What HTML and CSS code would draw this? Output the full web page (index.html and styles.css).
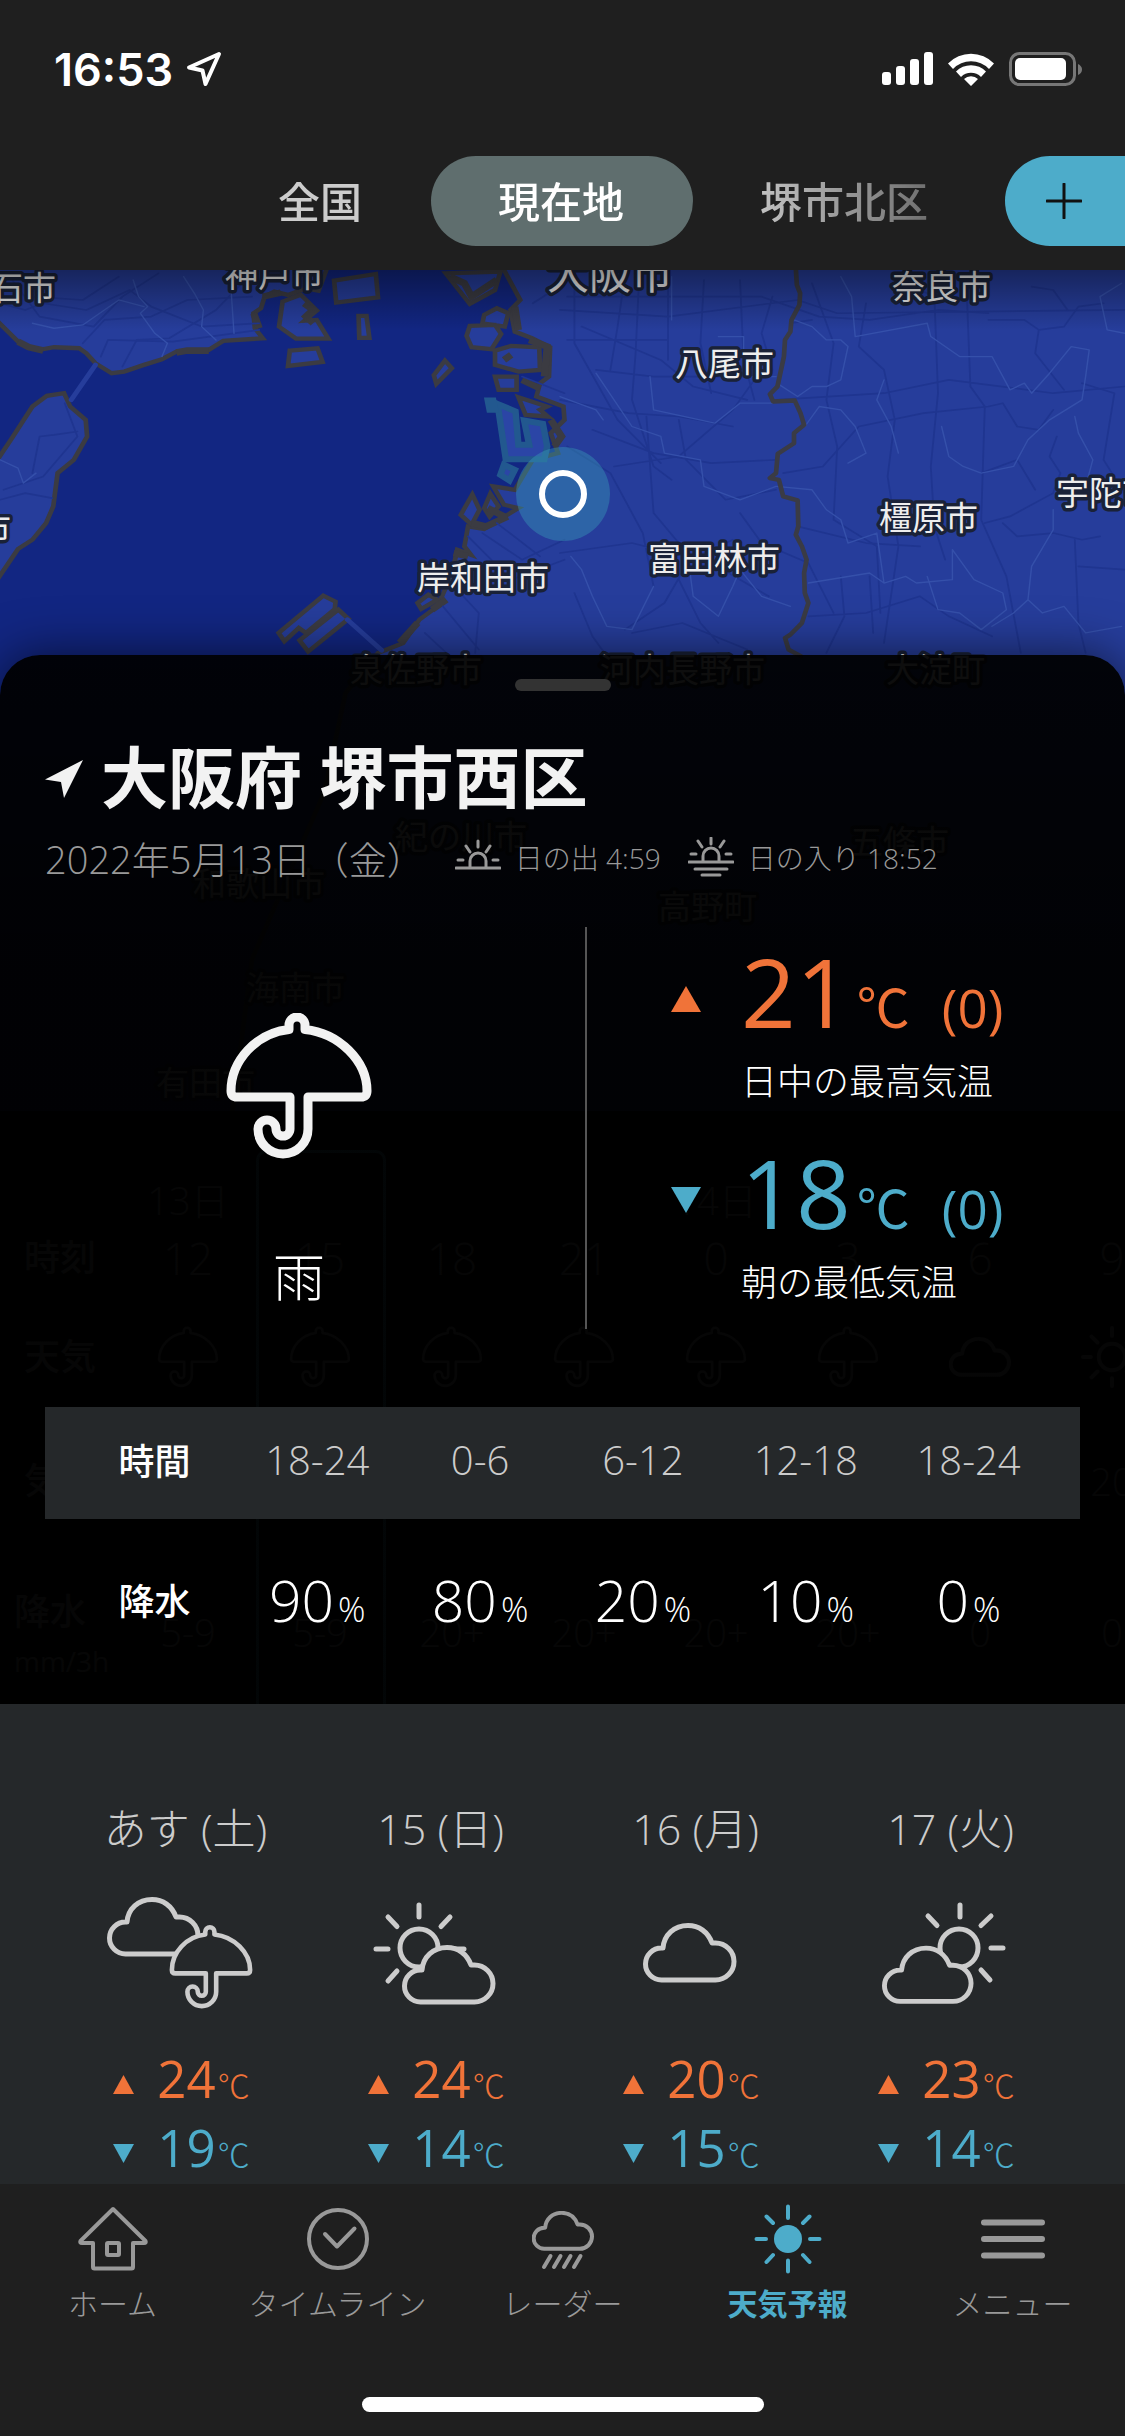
FILE: index.html
```
<!DOCTYPE html>
<html lang="ja">
<head>
  <meta charset="UTF-8">
  <meta name="viewport" content="width=device-width, initial-scale=1.0">
  <title>天気予報</title>
  <link rel="stylesheet" href="styles.css">
</head>
<body>
  <!-- アイコン -->
  <svg class="defs" width="0" height="0" aria-hidden="true">
    <symbol id="umbrella" viewBox="0 0 146 146">
      <path d="M63 16.500V12a8 8 0 0 1 16 0V16.500C113 20 141 48 141 78q0 6-6 6H82V116a25 25 0 0 1-50 0a9 9 0 0 1 18 0a7 7 0 0 0 14 0V84H11q-6 0-6-6C5 48 30 20 63 16.500Z"/>
    </symbol>
    <symbol id="cloud" viewBox="0 0 94 60">
      <path d="M18.500 25a16 16 0 0 0 0 32H72.500a18.500 18.500 0 0 0 0-37h-3.500C65 9 56 2.500 45 2.500C31 2.500 21 12 20 25Z"/>
    </symbol>
    <symbol id="sunny" viewBox="0 0 94 94">
      <circle cx="47" cy="47" r="20"/>
      <path d="M47 3V15M47 79V91M3 47H15M79 47H91M16 16 25 25M78 16 69 25M16 78 25 69M78 78 69 69"/>
    </symbol>
  </svg>

  <div class="app">
    <header class="header">
      <div class="status">
        <span class="clock">16:53</span>
        <svg class="status-arrow" viewBox="0 0 36 36"><path d="M33 3 3 16.500l13.500 3L19.500 33Z"/></svg>
        <svg class="status-icons" viewBox="0 0 202 36">
          <rect x="0" y="21" width="9" height="13" rx="3"/>
          <rect x="14" y="15" width="9" height="19" rx="3"/>
          <rect x="28" y="8" width="9" height="26" rx="3"/>
          <rect x="42" y="1" width="9" height="33" rx="3"/>
          <path d="M66 12.500a32 32 0 0 1 46 0l-5 5.500a25 25 0 0 0-36 0ZM74 20.500a21 21 0 0 1 30 0l-5 5.500a14 14 0 0 0-20 0ZM82 28a10 10 0 0 1 14 0l-7 7Z"/>
          <rect class="batt-case" x="128.500" y="2.500" width="64" height="31" rx="9"/>
          <rect x="133" y="7" width="51" height="22" rx="5"/>
          <path class="batt-cap" d="M196 13q4 2 4 5.500t-4 5.500Z"/>
        </svg>
      </div>
      <div class="bar">
        <nav class="tabs">
          <button class="tab">全国</button>
          <button class="tab active">現在地</button>
          <button class="tab">堺市北区</button>
        </nav>
        <button class="add" aria-label="地点を追加">
          <svg viewBox="0 0 36 36"><path d="M18 1V35M1 18H35"/></svg>
        </button>
      </div>
    </header>

    <main>
      <div class="stage">
        <!-- 背面の地図と時系列 -->
        <div class="backdrop">
          <div class="map">
            <svg viewBox="0 270 1125 841" preserveAspectRatio="xMidYMin slice">
              <rect class="sea" x="0" y="270" width="1125" height="841"/>
              <g transform="translate(0 260) scale(.36 .333)">
                <!-- 陸地 -->
                <g class="land">
                  <path d="M-20 20V170L50 245 75 262 110 270 150 262 220 265 240 280 265 310 310 340 345 335 400 315 450 298 490 275 540 276 580 270 620 243 730 235 708 205 704 160 725 145 735 110 762 95 800 105 850 85 885 92 910 20Z"/>
                  <path d="M-20 620 30 540 90 440 130 408 178 400 195 440 238 480 242 530 205 600 160 640 148 740 128 790 90 840 50 868 -20 980Z"/>
                  <path d="M1390 10 1445 120 1418 150 1430 215 1478 235 1528 262 1525 350 1500 370 1490 410 1565 440 1568 480 1530 520 1550 580 1480 600 1430 690 1370 680 1400 735 1440 745 1345 808 1300 800 1290 860 1308 885 1270 870 1262 910 1240 980 1215 1040 1165 1080 1120 1150 1050 1180 960 1300 900 1600 700 2100 640 2600H3200V10Z"/>
                  <path d="M928 62 1044 42 1050 112 934 128ZM785 125 835 104 880 152 846 182 880 180 912 236H822L775 200ZM996 168h22l8 66h-28ZM805 272 882 265 896 306 800 318ZM1236 302 1255 325 1212 372 1205 346ZM1238 40 1390 35 1375 90 1305 132ZM1345 165 1380 145 1412 160 1402 200 1340 190ZM1305 198 1375 195 1392 222 1365 268 1310 262 1296 228ZM1375 272 1420 258 1498 262 1500 330 1440 335 1375 315ZM1375 350h60v40h-50ZM1440 412 1520 440 1500 450 1522 470 1460 465ZM1312 704 1332 750 1310 795 1280 765ZM1362 702 1385 740 1360 770 1345 745ZM1160 1030 1190 1005 1215 1020 1170 1048Z"/>
                  <path d="M898 1008 932 1026 930 1048 850 1120 830 1105 790 1145 774 1120ZM940 1050 968 1078 856 1176 832 1142Z"/>
                </g>
                <!-- 港の入り組んだ海岸 -->
                <path class="harbour" d="M50 245 80 262 120 272M490 278 520 272 580 272M705 160 720 205M730 110 780 98M1250 50 1290 70 1310 110 1380 60M1430 140 1440 210M1470 240 1520 260 1512 350M1400 300 1420 285M1450 360 1500 385M1530 480 1560 530 1540 560M1310 790 1350 800 1410 770M1355 745 1400 770M1260 880 1300 890M1200 1050 1240 1020M1110 1150 1160 1090M845 130 870 150 850 170 870 190"/>
                <g class="ward">
                  <path d="M1382 432 1432 455 1440 555 1470 555 1456 482 1508 492 1520 560 1512 598H1405Z"/>
                  <path d="M1355 422h15l5 28h-15ZM1400 615 1430 630 1415 662 1390 645Z"/>
                </g>
                <g class="bridge">
                  <path d="M265 315 198 420M965 1080 1060 1172"/>
                </g>
                <!-- 道路 -->
                <g class="road">
                  <path d="M0 130 70 150 120 130 240 150 360 90 420 140 560 200 720 190M20 40 110 170 260 200 340 110 440 40M230 250 290 180 420 170 520 120 700 110M60 40 90 110 230 120 330 50M340 320 380 240 470 235 600 150 690 50M280 290 300 240 480 245 720 210M90 640 110 530 150 525 215 515M10 690 120 650 215 530 180 430M0 720 70 700 145 715"/>
                  <path d="M1480 130 1568 70M1450 350 1568 400M1340 820 1450 900 1568 840M1300 830 1420 960 1568 900M1230 1040 1330 1170M1180 1120 1250 1190M1270 990 1330 1060 1320 1180M1380 790 1500 890"/>
                </g>
                <g class="border">
                  <path d="M370 60 385 110 410 140 390 160 430 220 465 250 450 290M90 190 150 205 230 195 330 120 400 140M510 50 540 100 565 150 560 200 600 240M640 60 650 220M0 600 50 625 65 670 100 640"/>
                </g>
              </g>
              <g transform="translate(560 260) scale(.36 .333)">
                <g class="road">
                  <path d="M20 110H560L720 170 860 180 1050 150 1190 160M0 150 300 170 660 120 770 160 1568 150M40 40V250L160 480 280 610M180 50 160 200 140 330M220 50 210 280 200 420 260 620 310 660M300 40V300M400 60 390 250 420 400M500 60 510 300 540 420M590 110 560 220 590 330M20 240H300M60 200 280 300 370 380 520 420M100 330 260 350 480 350M0 420 190 460 330 470 480 500M90 510 260 580 420 610 600 600M150 620 330 590 480 450 560 330M330 480 350 600 460 720 600 690M240 470 260 760 330 850"/>
                  <path d="M20 560 140 640 230 820 260 980M0 880 200 850 420 910 580 1010M40 1000 90 1130 130 1190M180 1110 290 1030 360 900 480 840M330 960 390 1090 440 1150M200 1120 340 1090 520 1170M500 760 560 850 690 910 760 1060M700 70 760 250 740 420 770 560 760 780 880 860 890 1060M850 130 830 260 900 330 930 480 910 650 940 860 900 1150M980 80 1040 110 1050 400 1030 620 1040 800 1070 900M1130 100 1140 380 1180 440 1170 780 1240 950 1280 1180M640 190 700 180M600 420 900 400 1080 360 1370 400 1568 380M620 640 730 620 830 500 1010 460 1190 440 1230 430 1270 500 1330 510 1370 450"/>
                  <path d="M1190 180 1290 180 1330 210 1400 200 1440 140 1510 130M1310 80 1370 90 1410 150M1330 210 1320 280 1400 390M1450 370 1540 400 1510 600 1568 700M1170 640 1270 600 1320 690M1180 790 1250 770 1370 700 1390 640 1360 590 1380 530M1230 790 1270 830 1370 820 1450 840 1500 830M1430 840 1440 1090 1460 1180M1440 920 1568 930M660 800 850 850 1000 860M690 1070 850 1060 1000 1010 1080 1070 1200 1130M780 950 790 1070 740 1180M860 950 870 1120"/>
                </g>
                <g class="border">
                  <path d="M310 50V180M650 180 700 200 740 240 780 240 800 260 780 360 740 380 700 380 660 410 610 375M780 50 810 110 820 230 1020 190 1030 230 1110 290 1200 290 1250 390 1290 370 1310 400 1360 340 1420 260 1470 270 1460 350 1450 420 1360 480 1300 540 1260 620 1170 640 1120 620 1080 590 1060 500M440 230H510V350H600M250 350 260 450 430 490 500 430 590 430M100 340 200 500 280 530 290 580 390 600 400 680 500 720 600 680"/>
                  <path d="M690 970 860 940 900 970 960 950 990 970 1090 960 1090 870 1150 960 1230 1000 1240 1050 1170 1110 1110 1060 1050 1050 1020 950M1370 750 1370 810 1310 920 1300 1020 1260 1060 1200 1100M1300 1020 1340 1060 1400 1040 1460 1120 1560 1100M1560 70 1500 110 1520 210 1568 220M1430 470 1440 520 1480 600 1460 680M30 890 60 930 90 1010 130 1100 200 1110 260 980M360 930 370 1010 440 1070 480 980 500 930 560 1010 640 1040M600 680 700 690 740 750 780 780 800 850 880 820 900 970M680 500 720 440 780 450 820 500 850 580 800 610M900 360 880 420 920 500 940 580M0 410 100 450 120 480"/>
                </g>
                <path class="prefecture" d="M655 25 658 75 667 100 665 135 643 180 640 215 625 240 622 290 604 380 583 403 592 425 652 422 668 460 678 495 650 520 650 550 605 582 600 640 583 655 608 660 620 710 660 722 662 800 655 825 672 860 685 900 678 940 680 1000 690 1030 672 1090 640 1125 625 1135 635 1170 670 1190"/>
              </g>
              <circle class="halo" cx="563" cy="494" r="47"/>
              <circle class="ring" cx="563" cy="494" r="21"/>
              <g class="place">
                <text x="-43" y="300">明石市</text>
                <text x="225" y="287">神戸市</text>
                <text class="big" x="547" y="289">大阪市</text>
                <text x="892" y="299">奈良市</text>
                <text x="675" y="376">八尾市</text>
                <text x="417" y="590">岸和田市</text>
                <text x="648" y="571">富田林市</text>
                <text x="879" y="530">橿原市</text>
                <text x="1056" y="505">宇陀市</text>
                <text x="-88" y="541">淡路市</text>
                <text x="350" y="682">泉佐野市</text>
                <text x="600" y="682">河内長野市</text>
                <text x="886" y="682">大淀町</text>
                <text x="395" y="849">紀の川市</text>
                <text x="850" y="854">五條市</text>
                <text x="193" y="896">和歌山市</text>
                <text x="658" y="919">高野町</text>
                <text x="246" y="1000">海南市</text>
                <text x="156" y="1095">有田市</text>
              </g>
            </svg>
          </div>
          <div class="series">
            <div class="series-now"></div>
            <div class="series-row"><b></b><span>13日</span><span></span><span></span><span></span><span>14日</span></div>
            <div class="series-row hours"><b>時刻</b><span>12</span><span>15</span><span>18</span><span>21</span><span>0</span><span>3</span><span>6</span><span>9</span></div>
            <div class="series-row sky"><b>天気</b>
              <span><svg><use href="#umbrella"/></svg></span>
              <span><svg><use href="#umbrella"/></svg></span>
              <span><svg><use href="#umbrella"/></svg></span>
              <span><svg><use href="#umbrella"/></svg></span>
              <span><svg><use href="#umbrella"/></svg></span>
              <span><svg><use href="#umbrella"/></svg></span>
              <span><svg><use href="#cloud"/></svg></span>
              <span><svg><use href="#sunny"/></svg></span>
            </div>
            <div class="series-row air"><b>気温</b><span></span><span></span><span></span><span></span><span></span><span></span><span></span><span>20</span></div>
            <div class="series-row rain"><b>降水<small>mm/3h</small></b><span>5-9</span><span>5-9</span><span>20+</span><span>20+</span><span>20+</span><span>20+</span><span>0</span><span>0</span></div>
          </div>
        </div>

        <section class="panel">
          <div class="handle"></div>
          <h1 class="place-name">
            <svg viewBox="0 0 38 38"><path d="M38 0 0 19.500 16 22 19 38Z"/></svg>
            大阪府 堺市西区
          </h1>
          <div class="meta">
            <span class="date">2022年5月13日（金）</span>
            <span class="sun">
              <svg viewBox="0 0 46 40"><path d="M1 31H45M3 23h5M38 23h5M15 30V24a8 8 0 0 1 16 0v6M23 4V10M11 9l4 6M35 9l-4 6"/></svg>
              日の出 4:59
            </span>
            <span class="sun">
              <svg viewBox="0 0 46 40"><path d="M1 25H45M3 17h5M38 17h5M15 24V19a8 8 0 0 1 16 0v5M23 1V7M10 4l4 6M36 4l-4 6M7 32H39M14 38H32"/></svg>
              日の入り 18:52
            </span>
          </div>

          <div class="today">
            <div class="today-sky">
              <svg class="icon-umbrella"><use href="#umbrella"/></svg>
              <p>雨</p>
            </div>
            <div class="today-temps">
              <div class="temp high">
                <svg viewBox="0 0 30 26"><path d="M15 0 30 26H0Z"/></svg>
                <p class="value">21<span class="unit">℃</span><span class="diff">(0)</span></p>
                <p class="label">日中の最高気温</p>
              </div>
              <div class="temp low">
                <svg viewBox="0 0 30 26"><path d="M0 0H30L15 26Z"/></svg>
                <p class="value">18<span class="unit">℃</span><span class="diff">(0)</span></p>
                <p class="label">朝の最低気温</p>
              </div>
            </div>
          </div>

          <table class="chance">
            <tr><th scope="row">時間</th><td>18-24</td><td>0-6</td><td>6-12</td><td>12-18</td><td>18-24</td></tr>
            <tr><th scope="row">降水</th><td>90<small>%</small></td><td>80<small>%</small></td><td>20<small>%</small></td><td>10<small>%</small></td><td>0<small>%</small></td></tr>
          </table>
        </section>
      </div>

      <section class="days">
        <article class="day">
          <h2>あす (土)</h2>
          <svg class="day-icon" viewBox="0 0 146 112">
            <use href="#cloud" width="94" height="60"/>
            <use class="small" href="#umbrella" x="62" y="28" width="84" height="84"/>
          </svg>
          <p class="t high"><svg viewBox="0 0 21 19"><path d="M10.500 0 21 19H0Z"/></svg><span>24<small>℃</small></span></p>
          <p class="t low"><svg viewBox="0 0 21 19"><path d="M0 0H21L10.500 19Z"/></svg><span>19<small>℃</small></span></p>
        </article>
        <article class="day">
          <h2>15 (日)</h2>
          <svg class="day-icon" viewBox="0 0 146 112">
            <g transform="translate(11 5)">
              <circle cx="46" cy="46" r="19"/>
              <path d="M46 3V15M15 15 24 24.500M77 15 68 24.500M3 47H15M15 79 24 69M68 47H91"/>
              <use href="#cloud" x="29" y="43" width="94" height="60"/>
            </g>
          </svg>
          <p class="t high"><svg viewBox="0 0 21 19"><path d="M10.500 0 21 19H0Z"/></svg><span>24<small>℃</small></span></p>
          <p class="t low"><svg viewBox="0 0 21 19"><path d="M0 0H21L10.500 19Z"/></svg><span>14<small>℃</small></span></p>
        </article>
        <article class="day">
          <h2>16 (月)</h2>
          <svg class="day-icon" viewBox="0 0 146 112">
            <use href="#cloud" x="26" y="26" width="94" height="60"/>
          </svg>
          <p class="t high"><svg viewBox="0 0 21 19"><path d="M10.500 0 21 19H0Z"/></svg><span>20<small>℃</small></span></p>
          <p class="t low"><svg viewBox="0 0 21 19"><path d="M0 0H21L10.500 19Z"/></svg><span>15<small>℃</small></span></p>
        </article>
        <article class="day">
          <h2>17 (火)</h2>
          <svg class="day-icon" viewBox="0 0 146 112">
            <g transform="translate(11 5)">
              <circle cx="76" cy="46" r="19"/>
              <path d="M77 3V15M45 14 54 23.500M108 14 98 23.500M108 46H120M98 68 107 78"/>
              <use href="#cloud" x="-1" y="43" width="92" height="60"/>
            </g>
          </svg>
          <p class="t high"><svg viewBox="0 0 21 19"><path d="M10.500 0 21 19H0Z"/></svg><span>23<small>℃</small></span></p>
          <p class="t low"><svg viewBox="0 0 21 19"><path d="M0 0H21L10.500 19Z"/></svg><span>14<small>℃</small></span></p>
        </article>
      </section>
    </main>

    <footer class="footer">
      <nav class="menu">
        <a href="#home">
          <svg viewBox="0 0 72 72"><path d="M36 6 3.500 38q-1 2 1.500 2H16V64q0 1.500 1.500 1.500H54.500q1.500 0 1.500-1.500V40H67q2.500 0 1.500-2Z"/><rect x="30" y="40" width="12" height="12" rx="1"/></svg>
          ホーム
        </a>
        <a href="#timeline">
          <svg viewBox="0 0 72 72"><circle cx="36" cy="36" r="29"/><path d="M23 31 35 43.500 52.500 25.500"/></svg>
          タイムライン
        </a>
        <a href="#radar">
          <svg viewBox="0 0 72 72"><use class="mini" href="#cloud" x="5" y="8" width="62" height="40"/><path d="M23.500 53 17 64M33.500 53 27 64M43.500 53 37 64M53.500 53 47 64"/></svg>
          レーダー
        </a>
        <a href="#forecast" class="active">
          <svg viewBox="0 0 72 72"><circle class="fill" cx="36" cy="36" r="14"/><path d="M36 3.500V15M36 57.500V68.500M4.500 36H14M58 36H67.500M14.500 13.500 21 20M57.500 13.500 51 20M14.500 59 21 52M57.500 59 51 52"/></svg>
          天気予報
        </a>
        <a href="#menu">
          <svg class="bars" viewBox="0 0 72 72"><path d="M7 19.500H65M7 36H65M7 52.500H65"/></svg>
          メニュー
        </a>
      </nav>
      <div class="home-bar"></div>
    </footer>
  </div>
</body>
</html>
```
FILE: styles.css
```
* { box-sizing: border-box; margin: 0; padding: 0; }
body { background: #1f1f1f; color: #fff; font-family: "Open Sans", "Noto Sans CJK JP", sans-serif; font-weight: 300; }
button { border: none; background: none; font: inherit; color: inherit; cursor: pointer; }
a { color: inherit; text-decoration: none; }
svg { display: block; flex: none; fill: none; stroke-linecap: round; stroke-linejoin: round; }
.defs { position: absolute; }
.app { min-height: 100vh; display: flex; flex-direction: column; }

/* ヘッダー */
.header { position: relative; z-index: 2; background: #1f1f1f; overflow: hidden; padding-bottom: 24px; }
.status { display: flex; align-items: center; height: 156px; padding: 0 41px 18px 54px; }
.clock { font-family: Inter, sans-serif; font-weight: 600; font-size: 45px; }
.status-arrow { width: 36px; height: 36px; margin-left: 13px; stroke: #fff; stroke-width: 4; }
.status-icons { width: 202px; height: 36px; margin-left: auto; fill: #fff; }
.batt-case { fill: none; stroke: #777; stroke-width: 3; }
.batt-cap { fill: #777; }
.bar { display: flex; height: 90px; }
.tabs { flex: 1; display: flex; justify-content: flex-end; -webkit-mask-image: linear-gradient(90deg, #000 74%, transparent 110%); mask-image: linear-gradient(90deg, #000 74%, transparent 110%); }
.tab { padding: 0 69px 4px 67px; border-radius: 45px; font-size: 42px; font-weight: 500; color: #ccc; white-space: nowrap; }
.tab.active { background: #5f6e6e; color: #fff; }
.add { flex: none; display: flex; align-items: center; width: 162px; margin: 0 -42px 0 8px; padding-left: 41px; border-radius: 45px; background: #4dacca; }
.add svg { width: 36px; height: 36px; stroke: #111; stroke-width: 3; }

/* 地図 */
main { flex: 1; display: flex; flex-direction: column; }
.stage { position: relative; }
.backdrop { position: absolute; inset: 0; display: flex; flex-direction: column; overflow: hidden; background: #000; }
.map { position: relative; height: 841px; }
.map svg { width: 100%; height: 100%; }
.map::after { content: ""; position: absolute; top: 0; left: 0; right: 0; height: 60px; background: linear-gradient(rgba(0,0,0,.4), transparent); }
.sea { fill: #122682; }
.land { fill: #263d9b; stroke: #3b3b42; stroke-width: 13; stroke-linejoin: miter; }
.harbour { stroke: #3b3b42; stroke-width: 20; stroke-linejoin: miter; stroke-linecap: butt; }
.ward { fill: #2b45a6; stroke: #22588f; stroke-width: 18; stroke-linejoin: miter; }
.bridge { stroke: #263d9b; stroke-width: 14; }
.road { stroke: #1f3590; stroke-width: 5; }
.border { stroke: #3550aa; stroke-width: 4; }
.prefecture { stroke: #3a3b45; stroke-width: 13; }
.halo { fill: rgba(58, 160, 185, .4); }
.ring { stroke: #fff; stroke-width: 6; }
.place { font-size: 33px; font-weight: 400; fill: #eee; stroke: #1a2238; stroke-width: 7; paint-order: stroke; }
.place .big { font-size: 42px; }

/* 時系列 */
.series { position: relative; flex: 1; padding-top: 60px; color: #bbb; font-size: 38px; }
.series-now { position: absolute; top: 39px; bottom: 0; left: 256px; width: 130px; border: 3px solid #4dacca; border-bottom: none; border-radius: 10px 10px 0 0; }
.series-row { display: flex; height: 58px; line-height: 58px; }
.series-row b { flex: none; width: 122px; padding-left: 24px; font-size: 36px; font-weight: 500; }
.series-row span { flex: none; width: 132px; text-align: center; }
.series .hours { height: 54px; font-size: 44px; }
.series .sky { height: 148px; align-items: center; }
.series .sky svg { width: 62px; height: 62px; margin: 0 auto; stroke: #bbb; stroke-width: 6; }
.series .air { height: 100px; align-items: center; }
.series .rain { height: 173px; padding-top: 52px; }
.series .rain b { padding-left: 14px; }
.series .rain span { padding-top: 20px; }
.series .rain small { display: block; font-size: 28px; line-height: 40px; }

/* パネル */
.panel { position: relative; margin-top: 385px; padding: 24px 45px 0; border-radius: 40px 40px 0 0; background: linear-gradient(rgba(0, 0, 0, .94), rgba(0, 0, 0, .97) 30%); box-shadow: 0 0 50px rgba(0, 0, 0, .6); }
.handle { width: 96px; height: 12px; margin: 0 auto; border-radius: 6px; background: #333; }
.place-name { display: flex; align-items: center; gap: 18px; height: 96px; margin-top: 38px; font-size: 67px; font-weight: 700; line-height: 96px; color: #f2f2f2; }
.place-name svg { width: 38px; height: 38px; margin-top: 4px; fill: #f2f2f2; }
.meta { display: flex; align-items: center; height: 44px; margin-top: 10px; color: #999; white-space: nowrap; }
.date { font-size: 38px; }
.sun { display: flex; align-items: center; gap: 14px; margin-left: 27px; font-size: 28px; }
.date + .sun { margin-left: 30px; }
.sun svg { width: 46px; height: 40px; stroke: #999; stroke-width: 3; }

.today { display: grid; grid-template-columns: 540px 1fr; height: 402px; margin-top: 48px; }
.today-sky { display: flex; flex-direction: column; align-items: center; padding: 86px 32px 0 0; }
.today-sky p { margin-top: 80px; font-size: 52px; line-height: 76px; }
.icon-umbrella { width: 146px; height: 146px; stroke: #f2f2f2; stroke-width: 9; }
.today-temps { display: flex; flex-direction: column; gap: 35px; padding: 16px 0 0 84px; border-left: 2px solid #555; }
.temp { display: grid; grid-template-columns: 70px 1fr; }
.temp > svg { align-self: end; width: 30px; height: 26px; margin-bottom: 27px; }
.value { height: 96px; font-size: 96px; font-weight: 400; line-height: 96px; white-space: nowrap; }
.unit, .diff { font-size: 53px; line-height: 0; }
.unit { margin-left: 6px; }
.diff { margin-left: 32px; }
.label { grid-column: 2; margin-top: 16px; font-size: 36px; line-height: 54px; }
.high { color: #f07339; }
.high svg { fill: #f07339; }
.low { color: #4dacca; }
.low svg { fill: #4dacca; }
.label { color: #fff; }

.chance { display: block; margin-top: 78px; }
.chance tbody { display: block; }
.chance tr { display: grid; grid-template-columns: repeat(6, 1fr); align-items: center; padding: 0 30px 8px 28px; text-align: center; }
.chance tr:first-child { height: 112px; background: #25282a; }
.chance tr:last-child { height: 185px; padding-bottom: 24px; }
.chance th { font-size: 36px; font-weight: 500; }
.chance tr:first-child td { font-size: 40px; color: #ccc; }
.chance tr:last-child td { font-size: 57px; line-height: 72px; }
.chance small { margin-left: 4px; font-size: 34px; line-height: 0; }

/* 週間 */
.days { position: relative; flex: 1; display: grid; grid-template-columns: repeat(4, 1fr); padding: 93px 53px 0 52px; background: #25282a; }
.day { display: flex; flex-direction: column; align-items: center; }
.day h2 { padding-left: 12px; font-size: 43px; font-weight: 300; line-height: 64px; color: #ccc; }
.day-icon { width: 146px; height: 112px; margin: 36px 0 35px; overflow: visible; fill: #25282a; stroke: #ccc; stroke-width: 5; }
.day-icon .small { stroke-width: 8; }
.t { display: flex; align-items: center; gap: 23px; height: 69px; padding-left: 4px; font-size: 51px; font-weight: 400; line-height: 69px; }
.t svg { width: 21px; height: 19px; margin-top: 12px; }
.t small { margin-left: 2px; font-size: 32px; font-weight: 300; line-height: 0; }

/* 下部メニュー */
.footer { height: 252px; padding-top: 19px; background: #1f1f1f; }
.menu { display: grid; grid-template-columns: repeat(5, 1fr); }
.menu a { display: flex; flex-direction: column; align-items: center; font-size: 30px; line-height: 44px; color: #999; }
.menu svg { width: 72px; height: 72px; margin-bottom: 7px; stroke: #999; stroke-width: 4; }
.menu .mini { stroke-width: 6; }
.menu .bars { stroke-width: 6; }
.menu .active { color: #4dacca; font-weight: 700; }
.menu .active svg { stroke: #4dacca; }
.menu .fill { fill: #4dacca; stroke: none; }
.home-bar { width: 402px; height: 15px; margin: 71px auto 0; border-radius: 8px; background: #fff; }
```
